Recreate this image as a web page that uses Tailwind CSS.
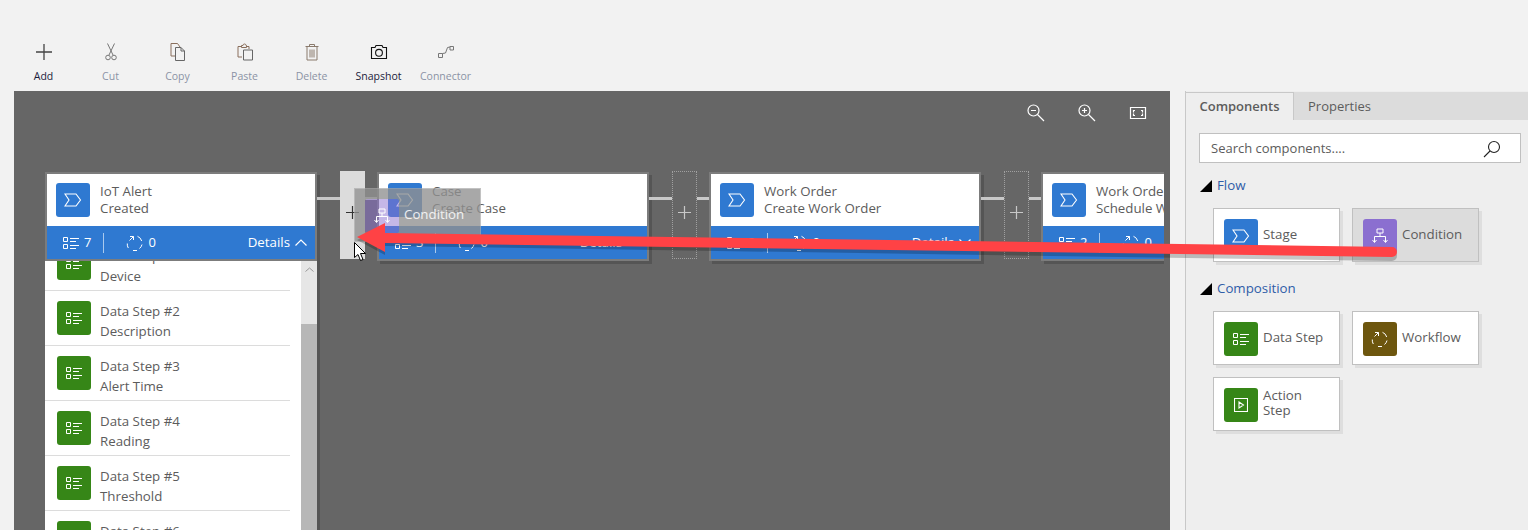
<!DOCTYPE html>
<html lang="en">

<head>
  <meta charset="UTF-8">
  <title>Flow Designer</title>
  <script src="https://cdn.jsdelivr.net/npm/@tailwindcss/browser@4"></script>
</head>

<body class="relative w-[1528px] h-[530px] overflow-hidden bg-[#f2f2f2] font-['Open_Sans',sans-serif] text-[#5c5c5c]">
  <!-- toolbar -->
  <div class="flex h-[91px] pl-[10px] pt-[42px] text-[10.5px]">
    <div class="flex flex-col items-center w-[67px] text-[#1c1c3c]">
      <svg class="w-[20px] h-[20px] mb-[7px]" viewBox="0 0 20 20" fill="none" stroke="#444" stroke-width="1.3"><path d="M10 2v16M2 10h16"/></svg>
      <span>Add</span>
    </div>
    <div class="flex flex-col items-center w-[67px] text-[#8b93a5]">
      <svg class="w-[20px] h-[20px] mb-[7px]" viewBox="0 0 20 20" fill="none" stroke="#777" stroke-width="1"><path d="M6.500 1.500l5.500 11.500M13.500 1.500L8 13"/><circle cx="7" cy="15.500" r="2.300"/><circle cx="13" cy="15.500" r="2.300"/></svg>
      <span>Cut</span>
    </div>
    <div class="flex flex-col items-center w-[67px] text-[#8b93a5]">
      <svg class="w-[20px] h-[20px] mb-[7px]" viewBox="0 0 20 20" fill="none" stroke="#8a6f5c" stroke-width="1"><path d="M7.500 14H3V1.500h6.500L12 5"/><path stroke="#666" d="M7.500 5.500H13l3.500 3.500v9.500h-9zM13 5.500V9h3.500"/></svg>
      <span>Copy</span>
    </div>
    <div class="flex flex-col items-center w-[67px] text-[#8b93a5]">
      <svg class="w-[20px] h-[20px] mb-[7px]" viewBox="0 0 20 20" fill="none" stroke="#8a6f5c" stroke-width="1"><path d="M7 15H3V4.500h3M11 4.500h3V7"/><path d="M6.500 5.500V3.500H8a1.500 1.500 0 0 1 3 0h.5v2z"/><path stroke="#666" d="M8.500 8h9v10h-9z"/></svg>
      <span>Paste</span>
    </div>
    <div class="flex flex-col items-center w-[67px] text-[#8b93a5]">
      <svg class="w-[20px] h-[20px] mb-[7px]" viewBox="0 0 20 20" fill="none" stroke="#8a7a6c" stroke-width="1"><path d="M3.500 4.500h13M7.500 4.500V2.500h5v2M5 4.500v13.500h10V4.500M8 7.500v8M10 7.500v8M12 7.500v8"/></svg>
      <span>Delete</span>
    </div>
    <div class="flex flex-col items-center w-[67px] text-[#1c1c3c]">
      <svg class="w-[20px] h-[20px] mb-[7px]" viewBox="0 0 20 20" fill="none" stroke="#111" stroke-width="1.100"><path d="M2.500 5.500h3.500l1-2h6l1 2h3.500v11h-15z"/><circle cx="10" cy="10.800" r="3.400"/></svg>
      <span>Snapshot</span>
    </div>
    <div class="flex flex-col items-center w-[67px] text-[#8b93a5]">
      <svg class="w-[20px] h-[20px] mb-[7px]" viewBox="0 0 20 20" fill="none" stroke="#777" stroke-width="1"><path d="M2.500 11.500h4v4h-4zM14 4.500h3.500v3.500H14zM6.500 11.500l3-.5 2-5.500 2.500-.5"/></svg>
      <span>Connector</span>
    </div>
  </div>

  <div class="flex h-[439px] pl-[14px]">
    <!-- canvas -->
    <div class="relative w-[1156px] h-full bg-[#666666] overflow-hidden">
      <div class="absolute top-[12px] right-[22px] flex gap-[31px]">
        <svg class="w-[20px] h-[20px]" viewBox="0 0 20 20" fill="none" stroke="#fff" stroke-width="1.200"><circle cx="7.500" cy="7.500" r="5.500"/><path d="M5 7.500h5M11.500 11.500l6.500 6.500"/></svg>
        <svg class="w-[20px] h-[20px]" viewBox="0 0 20 20" fill="none" stroke="#fff" stroke-width="1.200"><circle cx="7.500" cy="7.500" r="5.500"/><path d="M5 7.500h5M7.500 5v5M11.500 11.500l6.500 6.500"/></svg>
        <svg class="w-[20px] h-[20px]" viewBox="0 0 20 20" fill="none" stroke="#fff" stroke-width="1.200"><path d="M2.500 4.500h15v11h-15z"/><path d="M7 7.500H5.500v2M13 7.500h1.500v2M7 12.500H5.500v-2M13 12.500h1.500v-2"/></svg>
      </div>

      <!-- flow row -->
      <div class="w-[1150px] h-full overflow-hidden pl-[31px] pt-[81px]">
        <div class="flex items-start w-[1400px]">
          <!-- card 1 with open list -->
          <div class="flex flex-col w-[272px] shrink-0">
            <div class="border-2 border-[#7c7c7c] shadow-[3px_3px_0_#555]">
              <div class="flex h-[52px] bg-white pl-[9px] pt-[9px]">
                <div class="flex items-center justify-center w-[34px] h-[34px] rounded-[3px] bg-[#2f79d1]">
                  <svg class="w-[18px] h-[14px]" viewBox="0 0 18 14" fill="none" stroke="#fff" stroke-width="1.100"><path d="M1 1h11L16.500 7 12 13H1l4-6z"/></svg>
                </div>
                <div class="ml-[10px] text-[13.3px] leading-[17px]">
                  <div>IoT Alert</div>
                  <div>Created</div>
                </div>
              </div>
              <div class="flex items-center h-[33px] bg-[#2f79d1] text-white text-[13px] pl-[15px] pr-[8px]">
                <svg class="w-[18px] h-[14px] mr-[4px]" viewBox="0 0 18 14" fill="none" stroke="#fff"><path d="M1.500 1.500h4v4h-4zM1.500 8.500h4v4h-4zM8 2.500h9M8 5.500h6M8 9.500h9M8 12.500h6"/></svg>
                <span>7</span>
                <div class="w-px h-[20px] bg-[#a9c9ee] mx-[12px]"></div>
                <svg class="w-[18px] h-[18px] ml-[10px] mr-[4px]" viewBox="0 0 18 18" fill="none" stroke="#fff"><path d="M3.500 6.500l4-4M4 2.500h3.500V6M11.500 2.300a7 7 0 0 1 4.200 4.700M16 10.500a7 7 0 0 1-2.500 4M7 16.500h4M2.300 14a7 7 0 0 1-1-4.500"/></svg>
                <span>0</span>
                <span class="ml-auto text-[13.3px]">Details</span>
                <svg class="w-[12px] h-[7px] ml-[5px]" viewBox="0 0 12 7" fill="none" stroke="#fff" stroke-width="1.200"><path d="M.5 6.500L6 1l5.500 5.500"/></svg>
              </div>
            </div>
            <div class="flex h-[270px] bg-white overflow-hidden shadow-[3px_0_0_#555]">
              <div class="w-[245px] -mt-[25px] text-[13.3px] leading-[20px]">
                <div class="flex h-[55px] border-b border-[#dcdcdc] pl-[12px] pt-[10px]">
                  <div class="flex items-center justify-center w-[34px] h-[34px] rounded-[3px] bg-[#368617]"><svg class="w-[18px] h-[14px]" viewBox="0 0 18 14" fill="none" stroke="#fff"><path d="M1.500 1.500h4v4h-4zM1.500 8.500h4v4h-4zM8 2.500h9M8 5.500h6M8 9.500h9M8 12.500h6"/></svg></div>
                  <div class="ml-[9px]"><div>Data Step #1</div><div>Device</div></div>
                </div>
                <div class="flex h-[55px] border-b border-[#dcdcdc] pl-[12px] pt-[10px]">
                  <div class="flex items-center justify-center w-[34px] h-[34px] rounded-[3px] bg-[#368617]"><svg class="w-[18px] h-[14px]" viewBox="0 0 18 14" fill="none" stroke="#fff"><path d="M1.500 1.500h4v4h-4zM1.500 8.500h4v4h-4zM8 2.500h9M8 5.500h6M8 9.500h9M8 12.500h6"/></svg></div>
                  <div class="ml-[9px]"><div>Data Step #2</div><div>Description</div></div>
                </div>
                <div class="flex h-[55px] border-b border-[#dcdcdc] pl-[12px] pt-[10px]">
                  <div class="flex items-center justify-center w-[34px] h-[34px] rounded-[3px] bg-[#368617]"><svg class="w-[18px] h-[14px]" viewBox="0 0 18 14" fill="none" stroke="#fff"><path d="M1.500 1.500h4v4h-4zM1.500 8.500h4v4h-4zM8 2.500h9M8 5.500h6M8 9.500h9M8 12.500h6"/></svg></div>
                  <div class="ml-[9px]"><div>Data Step #3</div><div>Alert Time</div></div>
                </div>
                <div class="flex h-[55px] border-b border-[#dcdcdc] pl-[12px] pt-[10px]">
                  <div class="flex items-center justify-center w-[34px] h-[34px] rounded-[3px] bg-[#368617]"><svg class="w-[18px] h-[14px]" viewBox="0 0 18 14" fill="none" stroke="#fff"><path d="M1.500 1.500h4v4h-4zM1.500 8.500h4v4h-4zM8 2.500h9M8 5.500h6M8 9.500h9M8 12.500h6"/></svg></div>
                  <div class="ml-[9px]"><div>Data Step #4</div><div>Reading</div></div>
                </div>
                <div class="flex h-[55px] border-b border-[#dcdcdc] pl-[12px] pt-[10px]">
                  <div class="flex items-center justify-center w-[34px] h-[34px] rounded-[3px] bg-[#368617]"><svg class="w-[18px] h-[14px]" viewBox="0 0 18 14" fill="none" stroke="#fff"><path d="M1.500 1.500h4v4h-4zM1.500 8.500h4v4h-4zM8 2.500h9M8 5.500h6M8 9.500h9M8 12.500h6"/></svg></div>
                  <div class="ml-[9px]"><div>Data Step #5</div><div>Threshold</div></div>
                </div>
                <div class="flex h-[55px] pl-[12px] pt-[10px]">
                  <div class="flex items-center justify-center w-[34px] h-[34px] rounded-[3px] bg-[#368617]"><svg class="w-[18px] h-[14px]" viewBox="0 0 18 14" fill="none" stroke="#fff"><path d="M1.500 1.500h4v4h-4zM1.500 8.500h4v4h-4zM8 2.500h9M8 5.500h6M8 9.500h9M8 12.500h6"/></svg></div>
                  <div class="ml-[9px]"><div>Data Step #6</div></div>
                </div>
              </div>
              <div class="flex flex-col w-[16px] ml-auto">
                <div class="flex justify-center h-[63px] bg-[#e6e6e6] pt-[6px]">
                  <svg class="w-[9px] h-[5px]" viewBox="0 0 9 5" fill="none" stroke="#999"><path d="M.5 4.500L4.500 1l4 3.500"/></svg>
                </div>
                <div class="flex-1 bg-[#b7b7b7]"></div>
              </div>
            </div>
          </div>

          <div class="relative w-[23px] h-[3px] mt-[25px] bg-[#c8c8c8] shrink-0"></div>
          <div class="flex items-center justify-center w-[25px] h-[88px] -mt-px bg-[#dcdcdc] shrink-0 pb-[6px]">
            <svg class="w-[13px] h-[13px]" viewBox="0 0 13 13" fill="none" stroke="#333" stroke-width="1.200"><path d="M6.500 0v13M0 6.500h13"/></svg>
          </div>
          <div class="w-[12px] h-[3px] mt-[25px] bg-[#c8c8c8] shrink-0"></div>

          <!-- card 2 -->
          <div class="w-[272px] shrink-0 border-2 border-[#7c7c7c] shadow-[3px_3px_0_#555]">
            <div class="flex h-[52px] bg-white pl-[9px] pt-[9px]">
              <div class="flex items-center justify-center w-[34px] h-[34px] rounded-[3px] bg-[#2f79d1]">
                <svg class="w-[18px] h-[14px]" viewBox="0 0 18 14" fill="none" stroke="#fff" stroke-width="1.100"><path d="M1 1h11L16.500 7 12 13H1l4-6z"/></svg>
              </div>
              <div class="ml-[10px] text-[13.3px] leading-[17px]">
                <div>Case</div>
                <div>Create Case</div>
              </div>
            </div>
            <div class="flex items-center h-[33px] bg-[#2f79d1] text-white text-[13px] pl-[15px] pr-[8px]">
              <svg class="w-[18px] h-[14px] mr-[4px]" viewBox="0 0 18 14" fill="none" stroke="#fff"><path d="M1.500 1.500h4v4h-4zM1.500 8.500h4v4h-4zM8 2.500h9M8 5.500h6M8 9.500h9M8 12.500h6"/></svg>
              <span>3</span>
              <div class="w-px h-[20px] bg-[#a9c9ee] mx-[12px]"></div>
              <svg class="w-[18px] h-[18px] ml-[10px] mr-[4px]" viewBox="0 0 18 18" fill="none" stroke="#fff"><path d="M3.500 6.500l4-4M4 2.500h3.500V6M11.500 2.300a7 7 0 0 1 4.200 4.700M16 10.500a7 7 0 0 1-2.500 4M7 16.500h4M2.300 14a7 7 0 0 1-1-4.500"/></svg>
              <span>0</span>
              <span class="ml-auto text-[13.3px]">Details</span>
              <svg class="w-[12px] h-[7px] ml-[5px]" viewBox="0 0 12 7" fill="none" stroke="#fff" stroke-width="1.200"><path d="M.5.500L6 6l5.500-5.500"/></svg>
            </div>
          </div>

          <div class="relative w-[23px] h-[3px] mt-[25px] bg-[#c8c8c8] shrink-0"></div>
          <div class="flex items-center justify-center w-[25px] h-[88px] -mt-px border border-dotted border-[#a0a0a0] shrink-0 pb-[6px]">
            <svg class="w-[13px] h-[13px]" viewBox="0 0 13 13" fill="none" stroke="#c8c8c8" stroke-width="1.200"><path d="M6.500 0v13M0 6.500h13"/></svg>
          </div>
          <div class="w-[12px] h-[3px] mt-[25px] bg-[#c8c8c8] shrink-0"></div>

          <!-- card 3 -->
          <div class="w-[272px] shrink-0 border-2 border-[#7c7c7c] shadow-[3px_3px_0_#555]">
            <div class="flex h-[52px] bg-white pl-[9px] pt-[9px]">
              <div class="flex items-center justify-center w-[34px] h-[34px] rounded-[3px] bg-[#2f79d1]">
                <svg class="w-[18px] h-[14px]" viewBox="0 0 18 14" fill="none" stroke="#fff" stroke-width="1.100"><path d="M1 1h11L16.500 7 12 13H1l4-6z"/></svg>
              </div>
              <div class="ml-[10px] text-[13.3px] leading-[17px]">
                <div>Work Order</div>
                <div>Create Work Order</div>
              </div>
            </div>
            <div class="flex items-center h-[33px] bg-[#2f79d1] text-white text-[13px] pl-[15px] pr-[8px]">
              <svg class="w-[18px] h-[14px] mr-[4px]" viewBox="0 0 18 14" fill="none" stroke="#fff"><path d="M1.500 1.500h4v4h-4zM1.500 8.500h4v4h-4zM8 2.500h9M8 5.500h6M8 9.500h9M8 12.500h6"/></svg>
              <span>3</span>
              <div class="w-px h-[20px] bg-[#a9c9ee] mx-[12px]"></div>
              <svg class="w-[18px] h-[18px] ml-[10px] mr-[4px]" viewBox="0 0 18 18" fill="none" stroke="#fff"><path d="M3.500 6.500l4-4M4 2.500h3.500V6M11.500 2.300a7 7 0 0 1 4.200 4.700M16 10.500a7 7 0 0 1-2.500 4M7 16.500h4M2.300 14a7 7 0 0 1-1-4.500"/></svg>
              <span>0</span>
              <span class="ml-auto text-[13.3px]">Details</span>
              <svg class="w-[12px] h-[7px] ml-[5px]" viewBox="0 0 12 7" fill="none" stroke="#fff" stroke-width="1.200"><path d="M.5.500L6 6l5.500-5.500"/></svg>
            </div>
          </div>

          <div class="relative w-[23px] h-[3px] mt-[25px] bg-[#c8c8c8] shrink-0"></div>
          <div class="flex items-center justify-center w-[25px] h-[88px] -mt-px border border-dotted border-[#a0a0a0] shrink-0 pb-[6px]">
            <svg class="w-[13px] h-[13px]" viewBox="0 0 13 13" fill="none" stroke="#c8c8c8" stroke-width="1.200"><path d="M6.500 0v13M0 6.500h13"/></svg>
          </div>
          <div class="w-[12px] h-[3px] mt-[25px] bg-[#c8c8c8] shrink-0"></div>

          <!-- card 4, cut off by the canvas -->
          <div class="w-[272px] shrink-0 border-2 border-[#7c7c7c] shadow-[3px_3px_0_#555]">
            <div class="flex h-[52px] bg-white pl-[9px] pt-[9px]">
              <div class="flex items-center justify-center w-[34px] h-[34px] rounded-[3px] bg-[#2f79d1]">
                <svg class="w-[18px] h-[14px]" viewBox="0 0 18 14" fill="none" stroke="#fff" stroke-width="1.100"><path d="M1 1h11L16.500 7 12 13H1l4-6z"/></svg>
              </div>
              <div class="ml-[10px] text-[13.3px] leading-[17px]">
                <div>Work Order</div>
                <div>Schedule Work Order</div>
              </div>
            </div>
            <div class="flex items-center h-[33px] bg-[#2f79d1] text-white text-[13px] pl-[15px] pr-[8px]">
              <svg class="w-[18px] h-[14px] mr-[4px]" viewBox="0 0 18 14" fill="none" stroke="#fff"><path d="M1.500 1.500h4v4h-4zM1.500 8.500h4v4h-4zM8 2.500h9M8 5.500h6M8 9.500h9M8 12.500h6"/></svg>
              <span>2</span>
              <div class="w-px h-[20px] bg-[#a9c9ee] mx-[12px]"></div>
              <svg class="w-[18px] h-[18px] ml-[10px] mr-[4px]" viewBox="0 0 18 18" fill="none" stroke="#fff"><path d="M3.500 6.500l4-4M4 2.500h3.500V6M11.500 2.300a7 7 0 0 1 4.200 4.700M16 10.500a7 7 0 0 1-2.500 4M7 16.500h4M2.300 14a7 7 0 0 1-1-4.500"/></svg>
              <span>0</span>
            </div>
          </div>
        </div>
      </div>
    </div>

    <!-- right panel -->
    <div class="w-[343px] h-full ml-[15px] border-l border-[#c8c8c8] bg-[#eeeeee]">
      <div class="flex h-[28px] mt-px bg-[#dcdcdc] text-[13px] leading-[29px]">
        <div class="w-[108px] h-[28px] bg-[#eeeeee] border-r border-t border-[#c8c8c8] text-center font-semibold leading-[27px]">Components</div>
        <div class="pl-[14px]">Properties</div>
      </div>
      <div class="flex items-center justify-between w-[322px] h-[30px] ml-[13px] mt-[13px] pl-[11px] pr-[11px] pt-px bg-white border border-[#c0c0c0] text-[13px]">
        <span>Search components....</span>
        <svg class="w-[18px] h-[18px] mr-[8px]" viewBox="0 0 18 18" fill="none" stroke="#222" stroke-width="1.100"><circle cx="11" cy="7" r="5.500"/><path d="M7 11l-6 6"/></svg>
      </div>

      <div class="flex items-center h-[20px] ml-[14px] mt-[13px] text-[13.3px] text-[#2f5da8]">
        <div class="w-0 h-0 border-l-[12px] border-l-transparent border-b-[12px] border-b-black mr-[5px]"></div>
        Flow
      </div>
      <div class="flex gap-[12px] ml-[27px] mt-[12px] text-[13.3px]">
        <div class="flex w-[127px] h-[54px] p-[10px] bg-white border border-[#c0c0c0] shadow-[3px_3px_0_#dedede]">
          <div class="flex items-center justify-center w-[34px] h-[34px] shrink-0 rounded-[3px] bg-[#2f79d1]"><svg class="w-[18px] h-[14px]" viewBox="0 0 18 14" fill="none" stroke="#fff" stroke-width="1.100"><path d="M1 1h11L16.500 7 12 13H1l4-6z"/></svg></div>
          <span class="ml-[5px] pt-[5px] leading-[20px]">Stage</span>
        </div>
        <div class="flex w-[127px] h-[54px] p-[10px] bg-[#dcdcdc] border border-[#c0c0c0] shadow-[3px_3px_0_#dedede]">
          <div class="flex items-center justify-center w-[34px] h-[34px] shrink-0 rounded-[3px] bg-[#8b6fd0]"><svg class="w-[16px] h-[16px]" viewBox="0 0 16 16" fill="none" stroke="#fff"><path d="M5 1h6v4H5zM8 5v3.500M2.500 14V8.500h11V14M.5 12l2 2.500 2-2.500M11.500 12l2 2.500 2-2.500"/></svg></div>
          <span class="ml-[5px] pt-[5px] leading-[20px]">Condition</span>
        </div>
      </div>

      <div class="flex items-center h-[20px] ml-[14px] mt-[17px] text-[13.3px] text-[#2f5da8]">
        <div class="w-0 h-0 border-l-[12px] border-l-transparent border-b-[12px] border-b-black mr-[5px]"></div>
        Composition
      </div>
      <div class="grid grid-cols-[127px_127px] gap-[12px] ml-[27px] mt-[12px] text-[13.3px]">
        <div class="flex h-[54px] p-[10px] bg-white border border-[#c0c0c0] shadow-[3px_3px_0_#dedede]">
          <div class="flex items-center justify-center w-[34px] h-[34px] shrink-0 rounded-[3px] bg-[#368617]"><svg class="w-[18px] h-[14px]" viewBox="0 0 18 14" fill="none" stroke="#fff"><path d="M1.500 1.500h4v4h-4zM1.500 8.500h4v4h-4zM8 2.500h9M8 5.500h6M8 9.500h9M8 12.500h6"/></svg></div>
          <span class="ml-[5px] pt-[5px] leading-[20px]">Data Step</span>
        </div>
        <div class="flex h-[54px] p-[10px] bg-white border border-[#c0c0c0] shadow-[3px_3px_0_#dedede]">
          <div class="flex items-center justify-center w-[34px] h-[34px] shrink-0 rounded-[3px] bg-[#6d560e]"><svg class="w-[18px] h-[18px]" viewBox="0 0 18 18" fill="none" stroke="#fff"><path d="M3.500 6.500l4-4M4 2.500h3.500V6M11.500 2.300a7 7 0 0 1 4.200 4.700M16 10.500a7 7 0 0 1-2.500 4M7 16.500h4M2.300 14a7 7 0 0 1-1-4.500"/></svg></div>
          <span class="ml-[5px] pt-[5px] leading-[20px]">Workflow</span>
        </div>
        <div class="flex h-[54px] p-[10px] bg-white border border-[#c0c0c0] shadow-[3px_3px_0_#dedede]">
          <div class="flex items-center justify-center w-[34px] h-[34px] shrink-0 rounded-[3px] bg-[#368617]"><svg class="w-[14px] h-[14px]" viewBox="0 0 14 14" fill="none" stroke="#fff" stroke-width="1.100"><path d="M.5.500h13v13H.5zM5 4l4.500 3L5 10z"/></svg></div>
          <span class="ml-[5px] leading-[15px]">Action Step</span>
        </div>
      </div>
    </div>
  </div>

  <!-- drag ghost: the icon's box shadow paints the grey, so the purple sits straight on what is below -->
  <div class="absolute left-[354px] top-[188px] flex w-[127px] h-[54px] p-[10px] overflow-hidden border border-[#a8a8a8]/70 text-white/85 text-[13.3px]">
    <div class="flex items-center justify-center w-[34px] h-[34px] shrink-0 rounded-[3px] bg-[#8b6fd0]/50 shadow-[0_0_0_200px_#919191c9]"><svg class="w-[16px] h-[16px]" viewBox="0 0 16 16" fill="none" stroke="#fff"><path d="M5 1h6v4H5zM8 5v3.500M2.500 14V8.500h11V14M.5 12l2 2.500 2-2.500M11.500 12l2 2.500 2-2.500"/></svg></div>
    <span class="relative ml-[5px] pt-[5px] leading-[20px]">Condition</span>
  </div>

  <!-- annotation arrow -->
  <svg class="absolute left-0 top-0 w-[1528px] h-[530px] pointer-events-none" viewBox="0 0 1528 530">
    <path fill="#000" fill-opacity=".22" d="M385 236L1392 250a5 5 0 0 1 5 5v1a5 5 0 0 1-5 5L385 246v9L357 240l28-14z"/>
    <path fill="#ff4245" d="M385 233L1392 247a5 5 0 0 1 5 5v0a5 5 0 0 1-5 5L385 243v9L357 237l28-14z"/>
  </svg>

  <!-- mouse pointer -->
  <svg class="absolute left-[354px] top-[242px] w-[13px] h-[20px]" viewBox="0 0 13 20"><path fill="#fff" stroke="#000" d="M.5.500v15l3.500-3 2.500 6 2.500-1-2.500-6h5z"/></svg>
</body>

</html>
